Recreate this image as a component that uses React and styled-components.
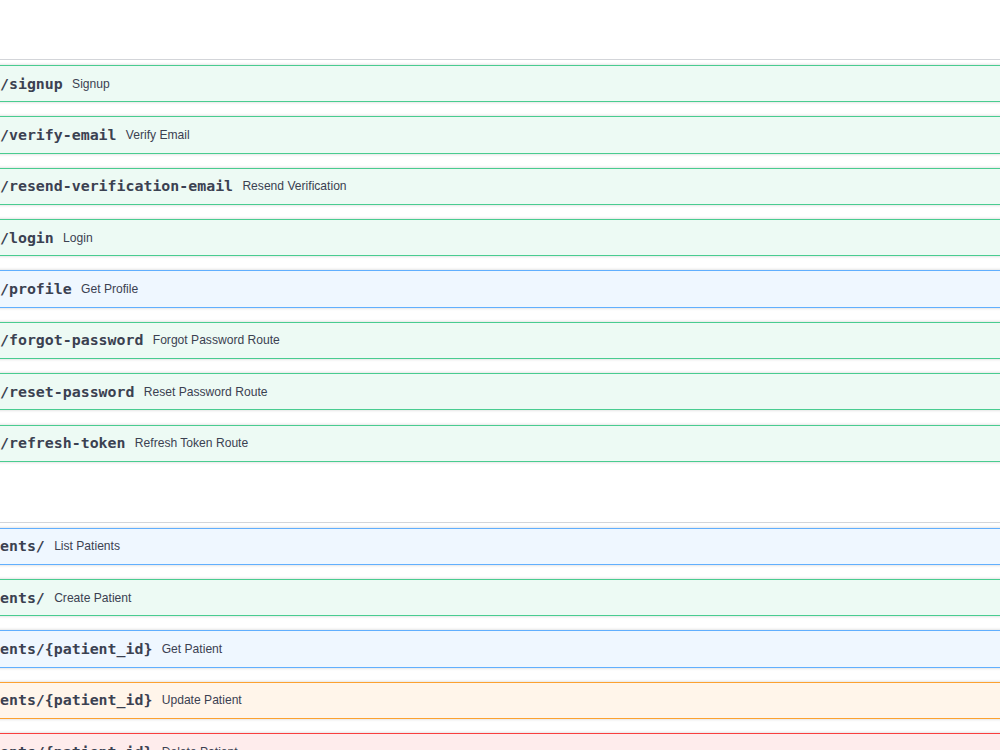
import styled, { createGlobalStyle } from "styled-components";

const GlobalStyle = createGlobalStyle`
  html, body {
    margin: 0;
    padding: 0;
    background: #ffffff;
    overflow: hidden;
  }
`;

const Page = styled.div`
  margin: 0 -20px;
  padding-top: 13.4px;
  width: calc(100% + 40px);
`;

const Section = styled.section``;

const TagHeader = styled.div`
  height: 45.6px;
  border-bottom: 1px solid #d3d5d9;
  margin-bottom: 5px;
`;

const methodColors = {
  get: { bg: "#eff7ff", border: "#61affe" },
  post: { bg: "#edfaf4", border: "#49cc90" },
  put: { bg: "#fff5ea", border: "#fca130" },
  delete: { bg: "#feecec", border: "#f93e3e" },
};

const Opblock = styled.div`
  box-sizing: border-box;
  height: 37.2px;
  margin-bottom: 14.2px;
  padding-left: 19px;
  display: flex;
  align-items: center;
  gap: 9.3px;
  background: ${({ $method }) => methodColors[$method].bg};
  border: 1px solid ${({ $method }) => methodColors[$method].border};
  box-shadow: 0 0 3px rgba(0, 0, 0, 0.19);
`;

const Path = styled.span`
  font-family: "DejaVu Sans Mono", monospace;
  font-weight: 700;
  font-size: 14.9px;
  color: #3b4151;
  white-space: nowrap;
`;

const Description = styled.span`
  font-family: "Liberation Sans", Arial, sans-serif;
  font-size: 12.1px;
  color: #3b4151;
  white-space: nowrap;
`;

const sections = [
  {
    id: "auth",
    ops: [
      { method: "post", path: "/signup", summary: "Signup" },
      { method: "post", path: "/verify-email", summary: "Verify Email" },
      {
        method: "post",
        path: "/resend-verification-email",
        summary: "Resend Verification",
      },
      { method: "post", path: "/login", summary: "Login" },
      { method: "get", path: "/profile", summary: "Get Profile" },
      {
        method: "post",
        path: "/forgot-password",
        summary: "Forgot Password Route",
      },
      {
        method: "post",
        path: "/reset-password",
        summary: "Reset Password Route",
      },
      {
        method: "post",
        path: "/refresh-token",
        summary: "Refresh Token Route",
      },
    ],
  },
  {
    id: "patients",
    ops: [
      { method: "get", path: "ents/", summary: "List Patients" },
      { method: "post", path: "ents/", summary: "Create Patient" },
      { method: "get", path: "ents/{patient_id}", summary: "Get Patient" },
      { method: "put", path: "ents/{patient_id}", summary: "Update Patient" },
      {
        method: "delete",
        path: "ents/{patient_id}",
        summary: "Delete Patient",
      },
    ],
  },
];

const App = () => {
  return (
    <>
      <GlobalStyle />
      <Page>
        {sections.map(({ id, ops }) => (
          <Section key={id}>
            <TagHeader />
            {ops.map(({ method, path, summary }) => (
              <Opblock key={method + path} $method={method}>
                <Path>{path}</Path>
                <Description>{summary}</Description>
              </Opblock>
            ))}
          </Section>
        ))}
      </Page>
    </>
  );
};

export default App;
